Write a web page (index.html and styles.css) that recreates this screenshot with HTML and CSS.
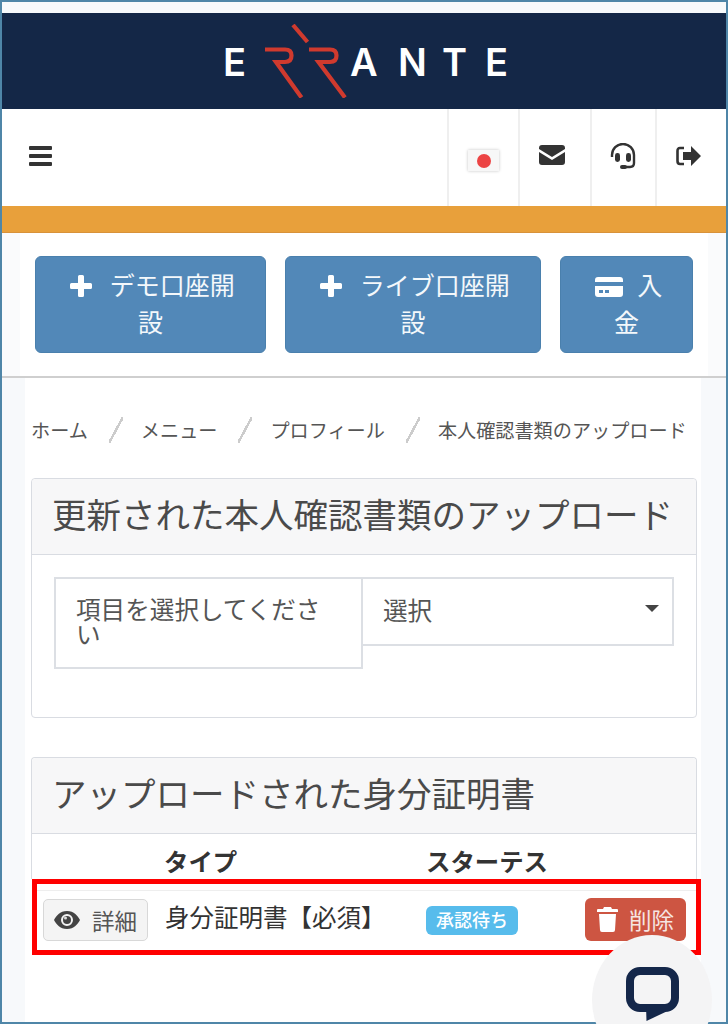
FILE: index.html
```html
<!DOCTYPE html>
<html lang="ja">
<head>
<meta charset="utf-8">
<title>Errante</title>
<link rel="stylesheet" href="styles.css">
</head>
<body>
<div class="frame">
  <div class="topstrip"></div>
  <header class="brand">
    <div class="logo">
      <span class="lt e1">E</span>
      <svg class="rr" width="85" height="74" viewBox="0 0 85 74">
        <g fill="none" stroke="#d03a2e" stroke-width="4.200">
          <path d="M0 25.500H20Q26.500 25.500 26.500 31.500Q26.500 38 20 38H11L36.500 73.500"/>
          <path d="M44 25.500H65Q71.500 25.500 71.500 31.500Q71.500 38 65 38H53.500L80 73.500"/>
          <path d="M28 1L42.500 18"/>
        </g>
      </svg>
      <span class="lt la">A</span><span class="lt ln">N</span><span class="lt lt2">T</span><span class="lt le">E</span>
    </div>
  </header>
  <nav class="toolbar">
    <div class="burger"><svg width="24" height="20" viewBox="0 0 24 20"><g fill="#333"><rect y="0" width="23" height="4" rx="1"/><rect y="8" width="23" height="4" rx="1"/><rect y="16" width="23" height="4" rx="1"/></g></svg></div>
    <div class="tools">
      <div class="tool t1"><span class="flag"><span class="sun"></span></span></div>
      <div class="tool t2"><svg width="26" height="20" viewBox="0 0 26 20"><path fill="#333" d="M3 0H23Q26 0 26 3V4L13 12L0 4V3Q0 0 3 0ZM0 7L13 15L26 7V17Q26 20 23 20H3Q0 20 0 17Z"/></svg></div>
      <div class="tool t3"><svg width="26" height="27" viewBox="0 0 26 27"><g fill="none" stroke="#333" stroke-width="2.400"><path d="M2 14V12A11 11 0 0 1 24 12V20Q24 24 20 24H13"/></g><rect x="5" y="10" width="5" height="9" rx="2.400" fill="#333"/><rect x="16" y="10" width="5" height="9" rx="2.400" fill="#333"/><rect x="10" y="22" width="7" height="4" rx="2" fill="#333"/></svg></div>
      <div class="tool t4"><svg width="25" height="20" viewBox="0 0 25 20"><path fill="#333" d="M15 0L25 10L15 20V14H7V6H15Z"/><path fill="none" stroke="#333" stroke-width="2.600" d="M8 2H4Q1.500 2 1.500 5V15Q1.500 18 4 18H8"/></svg></div>
    </div>
  </nav>
  <div class="orange"></div>
  <div class="actions">
    <a class="btn b1"><svg class="plus" width="22" height="22" viewBox="0 0 22 22"><path fill="#fff" d="M8 1.500Q8 0 9.500 0H12.500Q14 0 14 1.500V8H20.500Q22 8 22 9.500V12.500Q22 14 20.500 14H14V20.500Q14 22 12.500 22H9.500Q8 22 8 20.500V14H1.500Q0 14 0 12.500V9.500Q0 8 1.500 8H8Z"/></svg> デモ口座開設</a>
    <a class="btn b2"><svg class="plus" width="22" height="22" viewBox="0 0 22 22"><path fill="#fff" d="M8 1.500Q8 0 9.500 0H12.500Q14 0 14 1.500V8H20.500Q22 8 22 9.500V12.500Q22 14 20.500 14H14V20.500Q14 22 12.500 22H9.500Q8 22 8 20.500V14H1.500Q0 14 0 12.500V9.500Q0 8 1.500 8H8Z"/></svg> ライブ口座開設</a>
    <a class="btn b3"><svg class="card" width="28" height="20" viewBox="0 0 28 20"><path fill="#fff" fill-rule="evenodd" d="M3 0H25Q28 0 28 3V5H0V3Q0 0 3 0ZM0 9H28V17Q28 20 25 20H3Q0 20 0 17ZM4 13V16H8V13ZM10 13V16H14V13Z"/></svg> 入金</a>
  </div>
  <main class="main">
    <ol class="crumbs">
      <li>ホーム</li><li class="sep"></li><li>メニュー</li><li class="sep"></li><li>プロフィール</li><li class="sep"></li><li>本人確認書類のアップロード</li>
    </ol>
    <section class="panel p1">
      <h2 class="phead">更新された本人確認書類のアップロード</h2>
      <div class="pbody">
        <div class="field">
          <label class="flabel">項目を選択してください</label>
          <div class="fselect"><span>選択</span><i class="caret"></i></div>
        </div>
      </div>
    </section>
    <section class="panel p2">
      <h2 class="phead">アップロードされた身分証明書</h2>
      <div class="thead"><span class="th1">タイプ</span><span class="th2">スターテス</span></div>
    </section>
    <div class="row">
      <button class="detail"><svg width="26" height="18" viewBox="0 0 26 18"><path fill="#444" fill-rule="evenodd" d="M13 0C20 0 24 5 26 9C24 13 20 18 13 18C6 18 2 13 0 9C2 5 6 0 13 0ZM13 3A6 6 0 1 0 13 15A6 6 0 1 0 13 3Z"/><circle cx="13" cy="9" r="4" fill="#444"/><circle cx="11.500" cy="7" r="1.500" fill="#ddd"/></svg>詳細</button>
      <span class="rname">身分証明書【必須】</span>
      <span class="badge">承認待ち</span>
      <button class="del"><svg width="21" height="25" viewBox="0 0 21 25"><path fill="#fff" d="M7 0H14L15 2H20Q21 2 21 3V5H0V3Q0 2 1 2H6ZM2 7H19L18 23Q18 25 16 25H5Q3 25 3 23Z"/></svg>削除</button>
    </div>
  </main>
</div>
<div class="chat">
  <svg width="53" height="54" viewBox="0 0 53 54"><rect x="4" y="4" width="45" height="37" rx="10" fill="none" stroke="#14274a" stroke-width="8"/><path fill="#14274a" d="M20 38H40V44.700L20.500 54Z"/></svg>
</div>
</body>
</html>
```
FILE: styles.css
```css
* { box-sizing: border-box; }
html, body { margin: 0; padding: 0; }
body {
  width: 728px;
  height: 1024px;
  overflow: hidden;
  position: relative;
  background: #fff;
  font-family: "Noto Sans CJK JP", "Noto Sans", sans-serif;
  color: #333;
}
.frame {
  width: 728px;
  height: 1024px;
  border: 2px solid #4f86a8;
  background: #fff;
  overflow: hidden;
}
.topstrip { height: 11px; background: #f7f9fb; }
.brand {
  height: 96px;
  background: #142747;
  display: flex;
}
.logo {
  display: flex;
  align-items: flex-start;
  color: #fff;
  padding: 11px 0 0 221px;
}
.lt {
  font: 600 38px/1 "Inter", "Liberation Sans", sans-serif;
  margin-top: 19px;
  flex: none;
}
.e1 { width: 42px; }
.rr { flex: none; width: 85px; }
.la { width: 48px; }
.ln { width: 44px; }
.lt2 { width: 43px; }
.le { width: 21px; }
.toolbar {
  height: 97px;
  display: flex;
  justify-content: space-between;
  background: #fff;
}
.burger { padding: 37px 0 0 27px; }
.tools { display: flex; }
.tool {
  border-left: 2px solid #efefef;
  display: flex;
  justify-content: center;
}
.t1 { width: 71px; padding: 41px 0 0 0; }
.t2 { width: 72px; padding: 36px 7px 0 0; }
.t3 { width: 65px; padding: 34px 2px 0 0; }
.t4 { width: 71px; padding: 37px 6px 0 0; }
.flag {
  width: 31px;
  height: 21px;
  background: #f7f7f7;
  box-shadow: 0 0 3px #c4c4c4;
  display: flex;
  align-items: center;
  justify-content: center;
}
.sun { width: 14px; height: 14px; border-radius: 50%; background: #ec4444; flex: none; }
.orange {
  height: 27px;
  background: #e8a03b;
  border-bottom: 1px solid #d8923a;
}
.actions {
  height: 145px;
  padding: 23px 33px 0;
  display: flex;
  border-bottom: 2px solid #cfcfcf;
  align-items: flex-start;
  background: linear-gradient(90deg, #fafbfc 18px, #fff 18px, #fff 706px, #fafbfc 706px);
}
.btn {
  height: 97px;
  background: #5288b8;
  border: 1px solid #4a80ad;
  border-radius: 6px;
  color: #f4f8fb;
  font-size: 25px;
  line-height: 37px;
  text-align: center;
  padding: 9px 22px 0;
  flex: none;
  text-indent: 4px;
}
.b1 { width: 231px; margin-right: 19px; }
.b2 { width: 256px; margin-right: 19px; }
.b3 { width: 133px; }
.plus { vertical-align: -2px; margin-right: 12px; }
.card { vertical-align: -2px; margin-right: 9px; }
.main {
  background: linear-gradient(90deg, #f7f9fb 23px, #fff 23px, #fff 699px, #f7f9fb 699px);
  height: 644px;
}
.crumbs {
  list-style: none;
  margin: 0;
  padding: 35px 0 0 29px;
  height: 100px;
  display: flex;
  font-size: 19.150px;
  color: #555;
  white-space: nowrap;
  line-height: 34px;
}
.sep {
  width: 14px;
  height: 26px;
  margin: 4px 18px 0 21px;
  background: linear-gradient(to bottom right, transparent 45%, #ccc 45%, #ccc 55%, transparent 55%);
}
.panel {
  margin: 0 29px;
  border: 1px solid #d9dce2;
  border-radius: 4px;
  background: #fff;
}
.phead {
  margin: 0;
  height: 76px;
  background: #f7f7f8;
  border-bottom: 1px solid #d9dce2;
  font-size: 34.500px;
  font-weight: 400;
  color: #4a4a4a;
  line-height: 68px;
  padding-left: 20px;
  white-space: nowrap;
  border-radius: 4px 4px 0 0;
}
.p1 { height: 240px; }
.pbody { padding: 22px 0 0 22px; }
.field { display: flex; align-items: flex-start; }
.flabel {
  width: 309px;
  height: 92px;
  border: 2px solid #dcdfe4;
  font-size: 24.600px;
  line-height: 25px;
  padding: 17px 20px 0;
  color: #555;
}
.fselect {
  width: 311px;
  height: 69px;
  border: 2px solid #dcdfe4;
  border-left: 0;
  display: flex;
  align-items: center;
  justify-content: space-between;
  font-size: 24.600px;
  color: #555;
  padding: 0 13px 6px 20px;
}
.caret {
  width: 0;
  height: 0;
  border-left: 7px solid transparent;
  border-right: 7px solid transparent;
  border-top: 7px solid #444;
}
.p2 {
  margin-top: 39px;
  height: 122px;
  border-bottom: 0;
  border-radius: 4px 4px 0 0;
}
.thead {
  height: 45px;
  font-size: 24.400px;
  font-weight: 700;
  color: #333;
  display: flex;
  line-height: 54px;
}
.th1 { margin-left: 132px; width: 262px; }
.row {
  margin: 0 0 0 30px;
  width: 669px;
  height: 76px;
  border: 5px solid #f00;
  display: flex;
  align-items: flex-start;
  background: linear-gradient(#fff 6px, #eee 6px, #eee 7px, #fff 7px);
}
.detail {
  margin: 15px 0 0 6px;
  width: 105px;
  height: 42px;
  background: #f4f4f4;
  border: 1px solid #d8d8d8;
  border-radius: 5px;
  font: 400 22.500px/1 "Noto Sans CJK JP", sans-serif;
  color: #555;
  display: flex;
  align-items: center;
  justify-content: center;
  gap: 12px;
  padding: 0;
  flex: none;
}
.rname {
  margin: 16px 0 0 17px;
  width: 261px;
  font-size: 24.500px;
  line-height: 34px;
  color: #333;
  white-space: nowrap;
  flex: none;
}
.badge {
  margin-top: 22px;
  width: 92px;
  height: 29px;
  border-radius: 6px;
  background: #57bcec;
  color: #fff;
  font-size: 18px;
  font-weight: 500;
  line-height: 27px;
  text-align: center;
  flex: none;
}
.del {
  margin: 14px 0 0 67px;
  width: 101px;
  height: 43px;
  background: #cd5542;
  border: 0;
  border-radius: 6px;
  color: #f6e5e2;
  font: 400 22.500px/1 "Noto Sans CJK JP", sans-serif;
  display: flex;
  align-items: center;
  justify-content: center;
  gap: 11px;
  padding: 0;
  flex: none;
}
.chat {
  position: absolute;
  left: 592px;
  top: 935px;
  width: 120px;
  height: 130px;
  border-radius: 50%;
  background: #f4f4f5;
  display: flex;
  justify-content: center;
  padding-top: 32px;
}
```
